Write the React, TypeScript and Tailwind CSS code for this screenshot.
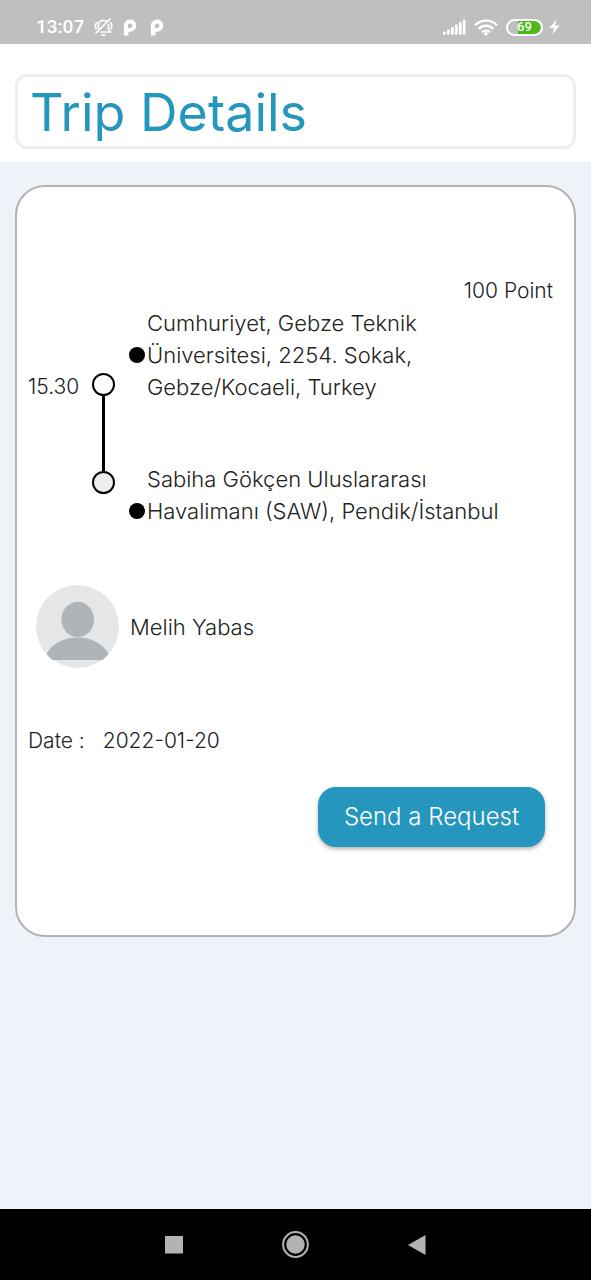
function BellOffIcon() {
  return (
    <svg width="19" height="18" viewBox="0 0 19 18" fill="none" stroke="white" strokeWidth="1.700" strokeLinecap="round" aria-hidden="true">
      <path d="M4.500 10V7.500C4.500 4.500 6.500 2.500 9.500 2.500c1.200 0 2.200.3 3 .9M14.500 6.500v5l2 2.500H7" />
      <path d="M2 15L16 1" />
      <path d="M8 17h3" />
      <path d="M1.200 8.500c0-1.700.7-3 1.800-4M1.200 8.500l1 2M17.800 8.500c0-1.500-.3-2.500-1-3.500M17.800 8.500l-.8 2" />
    </svg>
  );
}

function ParkIcon() {
  return (
    <svg width="14" height="17" viewBox="0 0 14 17" aria-hidden="true">
      <path
        d="M.8 16.500V7.200C.8 3.300 3.600.5 7.200.5s6 2.700 6 6.100-2.500 6.100-5.800 6.100H5.400v3.800z M7.100 4.500a2.200 2.200 0 0 0-2.200 2.200v2.200h2.200a2.200 2.200 0 0 0 0-4.400z"
        fill="white"
        fillRule="evenodd"
      />
    </svg>
  );
}

function SignalIcon() {
  return (
    <svg width="23" height="16" viewBox="0 0 23 16" fill="white" aria-hidden="true">
      <rect x="0" y="12.500" width="2.800" height="3.300" rx="1" />
      <rect x="4" y="10.500" width="2.800" height="5.300" rx="1" />
      <rect x="8" y="8" width="2.800" height="7.800" rx="1" />
      <rect x="12" y="5.500" width="2.800" height="10.300" rx="1" />
      <rect x="16" y="3" width="2.600" height="12.800" rx="1" />
      <rect x="19.800" y="0.500" width="2.600" height="15.300" rx="1" />
    </svg>
  );
}

function WifiIcon() {
  return (
    <svg width="24" height="17" viewBox="0 0 24 17" fill="none" stroke="white" strokeWidth="2.300" aria-hidden="true">
      <path d="M1 6.300C7 .1 17 .1 23 6.300" />
      <path d="M4.600 9.900c4.200-4.200 10.600-4.200 14.800 0" />
      <path d="M8 13.200c2.300-2.200 5.700-2.200 8 0" />
      <circle cx="12" cy="14.800" r="1.800" fill="white" stroke="none" />
    </svg>
  );
}

function BoltIcon() {
  return (
    <svg width="11" height="16" viewBox="0 0 11 16" fill="white" aria-hidden="true">
      <path d="M7.500.5L.5 9H5L3.500 15.500 10.500 6.500H6z" />
    </svg>
  );
}

function StatusBar() {
  return (
    <div className="flex h-11 items-center justify-between bg-[#bfbfbf] pt-2.5 pr-[31px] pl-9 text-white">
      <div className="flex items-center">
        <span className="font-[Roboto,sans-serif] text-[19px] leading-6 font-medium">13:07</span>
        <span className="ml-2.5 flex items-center gap-2.5">
          <BellOffIcon />
          <span className="flex gap-[13px]">
            <ParkIcon />
            <ParkIcon />
          </span>
        </span>
      </div>
      <div className="flex items-center">
        <SignalIcon />
        <span className="ml-2 flex items-center">
          <WifiIcon />
        </span>
        <span className="ml-2 flex h-[17px] w-[37px] items-center justify-center rounded-full border-2 border-white bg-linear-to-r from-transparent from-30% to-[#4db81a] to-30% bg-clip-padding font-[Roboto,sans-serif] text-[13px] leading-3 font-medium">
          69
        </span>
        <span className="ml-1.5">
          <BoltIcon />
        </span>
      </div>
    </div>
  );
}

function Timeline() {
  return (
    <div className="mt-[66px] flex w-[23px] flex-col items-center" aria-hidden="true">
      <span className="size-[23px] rounded-full border-2 border-black bg-white" />
      <span className="h-[75px] w-[3px] bg-black" />
      <span className="size-[23px] rounded-full border-2 border-black bg-[#eeeeee]" />
    </div>
  );
}

function Place({ lines }: { lines: string[] }) {
  return (
    <li className="flex items-start gap-0.5">
      <span className="mt-10 size-4 shrink-0 rounded-full bg-black" />
      <span>
        {lines.map((line) => (
          <span key={line} className="block">
            {line}
          </span>
        ))}
      </span>
    </li>
  );
}

function Avatar() {
  return (
    <svg className="size-[83px] shrink-0" viewBox="0 0 83 83" role="img" aria-label="Melih Yabas">
      <circle cx="41.500" cy="41.500" r="41.500" fill="#e4e6e7" />
      <ellipse cx="41.700" cy="34.500" rx="16.300" ry="17.700" fill="#aeb4b7" />
      <path d="M10.500 69C16 58.500 28 52.500 41.500 52.500S67 58.500 72.500 69A41.500 41.500 0 0 1 66.500 75h-50A41.500 41.500 0 0 1 10.500 69z" fill="#aeb4b7" />
    </svg>
  );
}

function NavBar() {
  return (
    <nav className="flex h-[71px] items-center justify-center gap-[95px] bg-black">
      <button type="button" aria-label="Recent apps" className="flex w-[26px] justify-center">
        <svg width="18" height="18" viewBox="0 0 18 18" aria-hidden="true">
          <rect width="18" height="17.500" fill="#b3b3b3" />
        </svg>
      </button>
      <button type="button" aria-label="Home">
        <svg width="27" height="27" viewBox="0 0 27 27" aria-hidden="true">
          <circle cx="13.500" cy="13.500" r="12.400" fill="none" stroke="#b3b3b3" strokeWidth="2" />
          <circle cx="13.500" cy="13.500" r="9.200" fill="#b3b3b3" />
        </svg>
      </button>
      <button type="button" aria-label="Back" className="flex w-[26px] justify-center">
        <svg width="18" height="20" viewBox="0 0 18 20" aria-hidden="true">
          <path d="M17.500 0v20L0 10z" fill="#b3b3b3" />
        </svg>
      </button>
    </nav>
  );
}

export default function App() {
  return (
    <div className="flex min-h-screen flex-col bg-[#eff3f9] font-[Inter,sans-serif]">
      <StatusBar />
      <header className="bg-white px-[15px] pt-[30px] pb-[13px]">
        <h1 className="rounded-xl border-3 border-[#eeeeee] px-3 pt-1.5 pb-[3px] text-[52px] leading-[60px] font-normal text-[#2596be]">
          Trip Details
        </h1>
      </header>
      <main className="flex-1 px-[15px] py-[23px]">
        <section className="rounded-[30px] border-2 border-[#b4b2b4] bg-white px-[11px] py-[88px] text-[21px] leading-8 font-light text-[#222222]">
          <p className="pr-2.5 text-right">100 Point</p>
          <div className="flex items-start">
            <time className="mt-16 w-16 shrink-0">15.30</time>
            <Timeline />
            <ul className="ml-3.5 flex flex-col gap-[60px] text-[22px]">
              <Place lines={["Cumhuriyet, Gebze Teknik", "Üniversitesi, 2254. Sokak,", "Gebze/Kocaeli, Turkey"]} />
              <Place lines={["Sabiha Gökçen Uluslararası", "Havalimanı (SAW), Pendik/İstanbul"]} />
            </ul>
          </div>
          <div className="mt-[58px] flex items-center gap-[11px] pl-2 text-[22px]">
            <Avatar />
            <span>Melih Yabas</span>
          </div>
          <p className="mt-[57px] flex gap-[18px]">
            <span>Date :</span>
            <time dateTime="2022-01-20">2022-01-20</time>
          </p>
          <div className="mt-[30px] flex justify-end pr-[18px]">
            <button
              type="button"
              className="h-[60px] w-[227px] rounded-[18px] bg-[#2596be] text-2xl text-white shadow-[0_2px_4px_rgba(0,0,0,0.3)]"
            >
              Send a Request
            </button>
          </div>
        </section>
      </main>
      <NavBar />
    </div>
  );
}
